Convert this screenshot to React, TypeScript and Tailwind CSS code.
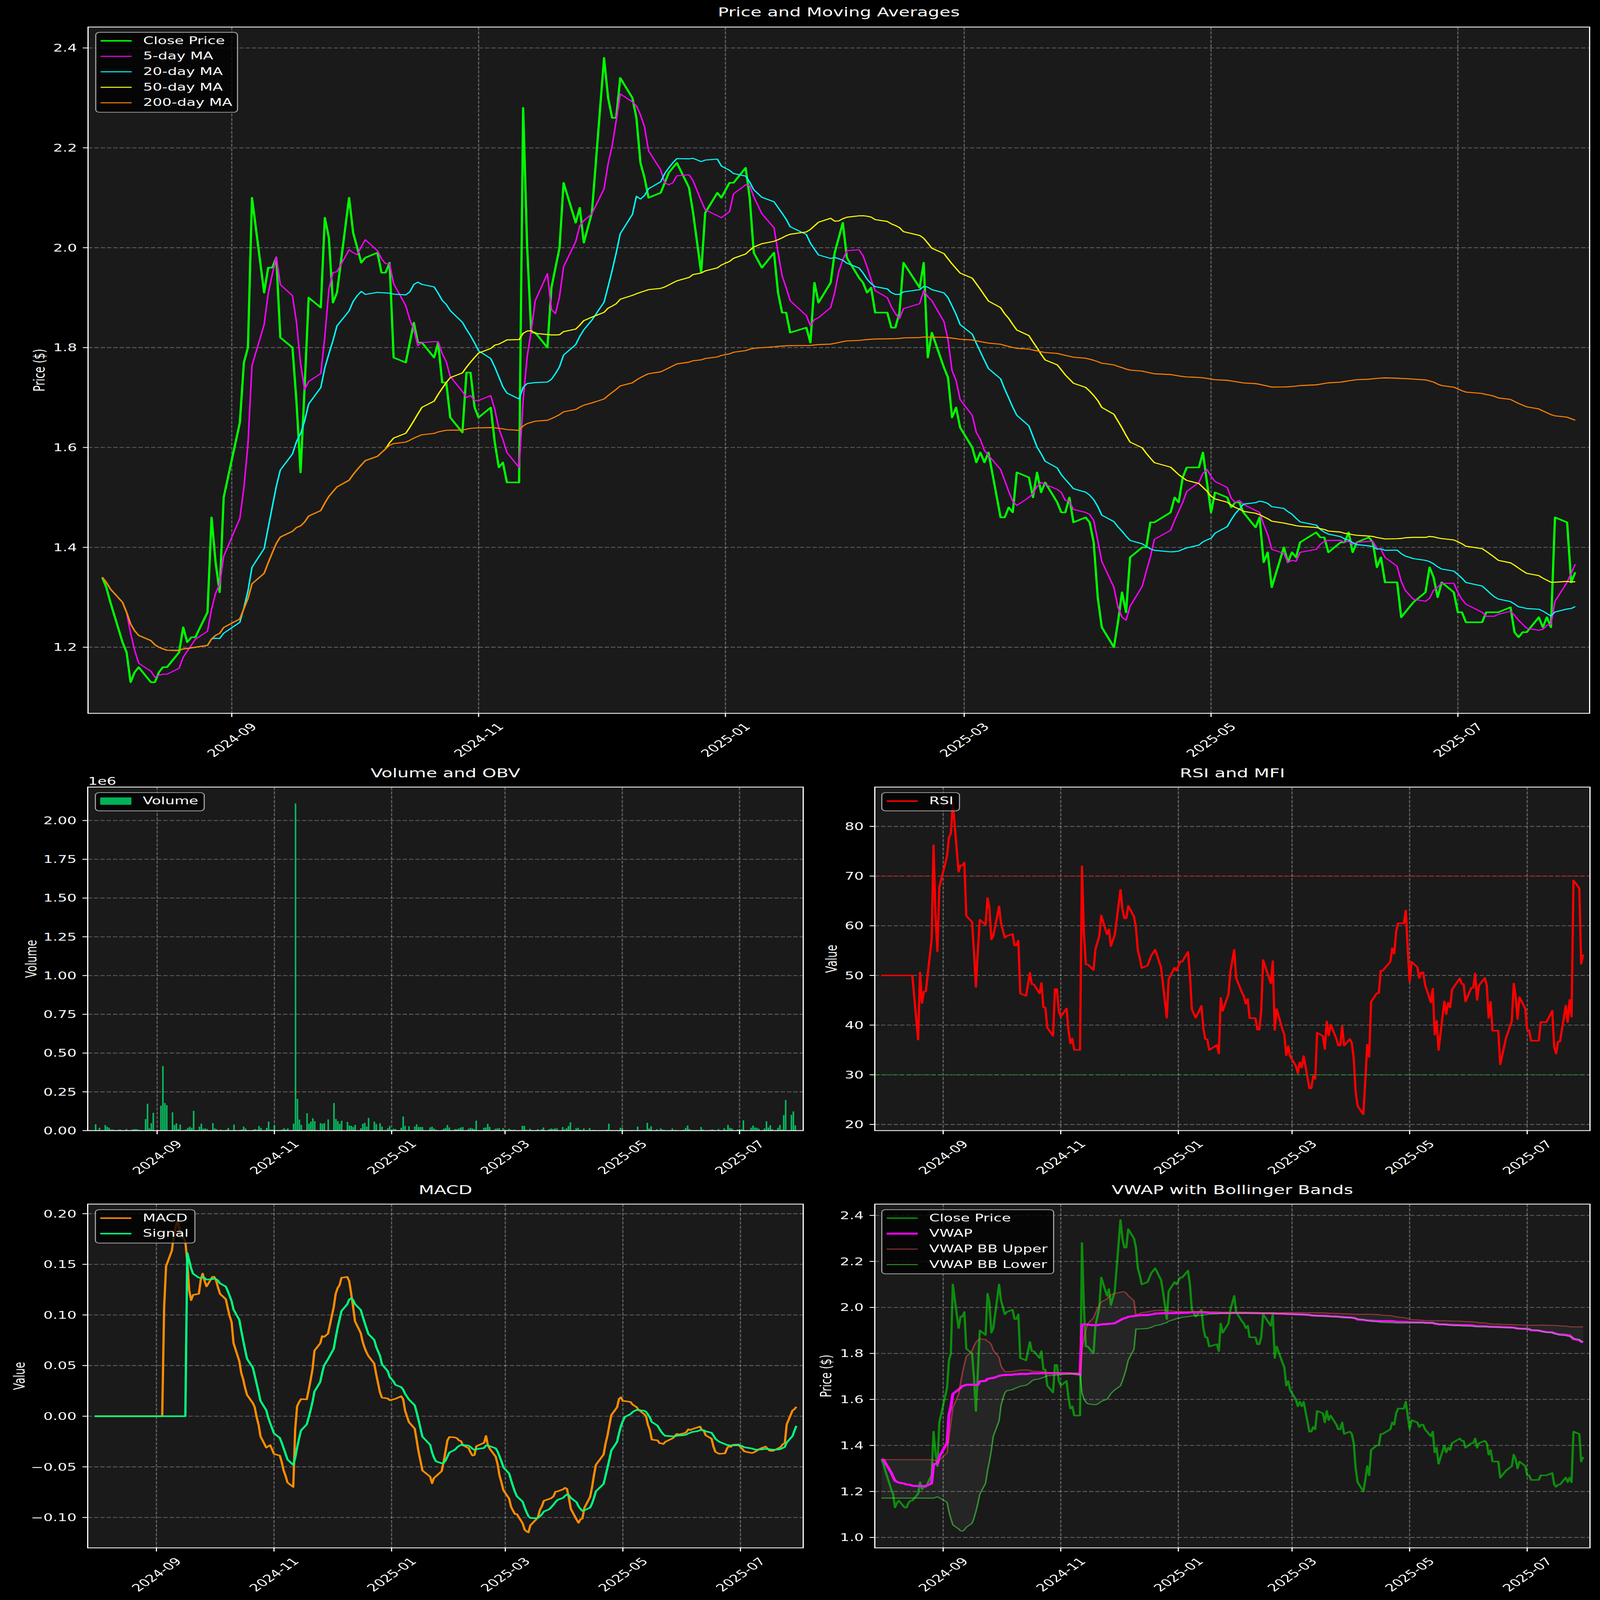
import type { ReactNode } from "react";

// [calendar day since 2024-07-31, close, volume in thousands]
const ROWS: [number, number, number][] = [
  [0,1.34,41],[1,1.32,3],[2,1.29,18],[5,1.21,36],[6,1.19,25],[7,1.13,18],[8,1.15,7],[9,1.16,7],[12,1.13,7],[13,1.13,6],[14,1.15,1],[15,1.16,3],[16,1.16,10],
  [19,1.19,7],[20,1.24,9],[21,1.21,10],[22,1.22,7],[23,1.22,4],[26,1.27,74],[27,1.46,173],[28,1.37,15],[29,1.31,48],[30,1.5,115],[34,1.65,161],[35,1.77,417],[36,1.8,178],[37,2.1,164],
  [40,1.91,118],[41,1.96,36],[42,1.96,47],[43,1.98,10],[44,1.82,39],[47,1.8,7],[48,1.69,17],[49,1.55,25],[50,1.72,17],[51,1.9,128],[54,1.88,25],[55,2.06,45],[56,2.02,12],[57,1.89,14],[58,1.91,10],
  [61,2.1,48],[62,2.03,14],[63,2.0,9],[64,1.97,1],[65,1.98,7],[68,1.99,6],[69,1.95,17],[70,1.95,1],[71,1.97,1],[72,1.78,39],[75,1.77,3],[76,1.81,7],[77,1.85,26],[78,1.81,14],[79,1.81,1],
  [82,1.78,6],[83,1.81,10],[84,1.73,6],[85,1.73,30],[86,1.66,17],[89,1.63,17],[90,1.75,58],[91,1.75,7],[92,1.68,6],[93,1.66,34],[96,1.68,3],[97,1.61,7],[98,1.56,15],[99,1.57,7],[100,1.53,14],
  [103,1.53,45],[104,2.28,2110],[105,2.0,205],[106,1.83,71],[107,1.83,37],[110,1.8,112],[111,1.92,45],[112,1.96,58],[113,2.0,80],[114,2.13,61],[117,2.05,48],[118,2.08,44],[119,2.01,48],[121,2.07,72],
  [124,2.38,178],[125,2.3,75],[126,2.26,61],[127,2.26,44],[128,2.34,64],[131,2.3,56],[132,2.26,33],[133,2.17,31],[134,2.14,23],[135,2.1,37],[138,2.11,15],[139,2.13,44],[140,2.15,50],[141,2.16,26],[142,2.17,82],
  [145,2.12,58],[146,2.07,42],[148,1.95,47],[149,2.07,26],[152,2.11,15],[153,2.1,30],[155,2.13,12],[156,2.13,10],[159,2.16,18],[160,2.1,91],[161,1.99,30],[163,1.96,28],[166,1.99,26],[167,1.91,41],[168,1.87,23],[169,1.87,23],[170,1.83,23],
  [174,1.84,20],[175,1.81,25],[176,1.93,14],[177,1.89,6],[180,1.93,4],[181,1.99,12],[182,2.02,17],[183,2.05,36],[184,1.98,20],[187,1.94,10],[188,1.93,9],[189,1.91,14],[190,1.92,20],[191,1.87,23],
  [194,1.87,12],[195,1.84,18],[196,1.84,14],[197,1.87,9],[198,1.97,64],[202,1.92,18],[203,1.97,20],[204,1.78,44],[205,1.83,23],[208,1.76,12],[209,1.74,14],[210,1.66,15],[211,1.68,1],[212,1.64,15],
  [215,1.6,12],[216,1.57,6],[217,1.59,4],[218,1.57,7],[219,1.59,1],[222,1.46,31],[223,1.46,30],[224,1.48,6],[225,1.47,4],[226,1.55,12],[229,1.54,3],[230,1.5,9],[231,1.55,1],[232,1.51,9],[233,1.53,20],
  [236,1.49,9],[237,1.47,14],[238,1.47,10],[239,1.5,14],[240,1.45,14],[243,1.46,23],[244,1.45,7],[245,1.41,15],[246,1.3,30],[247,1.24,53],[250,1.2,15],[251,1.25,18],[252,1.31,6],[253,1.27,3],[254,1.38,14],
  [257,1.4,17],[258,1.4,3],[259,1.45,4],[260,1.45,4],[264,1.47,4],[265,1.5,1],[266,1.49,6],[267,1.54,45],[268,1.56,3],[271,1.56,3],[272,1.59,3],[273,1.53,18],[274,1.47,17],[275,1.51,1],
  [278,1.5,1],[279,1.48,3],[280,1.49,1],[281,1.49,1],[282,1.47,26],[285,1.44,4],[286,1.46,3],[287,1.37,50],[288,1.39,14],[289,1.32,28],[292,1.4,9],[293,1.37,3],[294,1.39,15],[295,1.38,6],[296,1.41,4],
  [300,1.43,14],[301,1.42,4],[302,1.42,4],[303,1.39,1],[306,1.41,6],[307,1.41,17],[308,1.43,33],[309,1.39,10],[310,1.41,4],[313,1.42,4],[314,1.41,3],[315,1.36,23],[316,1.38,7],[317,1.33,1],
  [320,1.33,6],[321,1.26,7],[322,1.27,3],[324,1.29,10],[327,1.31,15],[328,1.36,4],[329,1.34,37],[330,1.3,18],[331,1.33,14],[334,1.31,7],[335,1.27,10],[336,1.27,9],[337,1.25,66],
  [341,1.25,18],[342,1.27,33],[343,1.27,20],[344,1.27,18],[345,1.27,12],[348,1.28,14],[349,1.23,60],[350,1.22,20],[351,1.23,34],[352,1.23,9],[355,1.26,18],[356,1.24,36],[357,1.26,7],[358,1.24,100],[359,1.46,197],
  [362,1.45,102],[363,1.33,124],[364,1.35,34],
];

const days = ROWS.map((r) => r[0]);
const close = ROWS.map((r) => r[1]);
const volume = ROWS.map((r) => r[2]);

const mean = (xs: number[]) => xs.reduce((a, b) => a + b, 0) / xs.length;
const rolling = (xs: number[], n: number) => xs.map((_, i) => mean(xs.slice(Math.max(0, i - n + 1), i + 1)));

const ema = (xs: number[], span: number) => {
  const a = 2 / (span + 1);
  const out: number[] = [];
  xs.forEach((x, i) => out.push(i === 0 ? x : out[i - 1] * (1 - a) + x * a));
  return out;
};

const ema12 = ema(close, 12);
const ema26 = ema(close, 26);
const macdRaw = close.map((_, i) => ema12[i] - ema26[i]).slice(25);
const signalRaw = ema(macdRaw, 9);
const macd = close.map((_, i) => (i < 25 ? 0 : macdRaw[i - 25]));
const signal = close.map((_, i) => (i < 33 ? 0 : signalRaw[i - 25]));

const rsi = (() => {
  let g = 0;
  let l = 0;
  return close.map((c, i) => {
    const d = i === 0 ? 0 : c - close[i - 1];
    g = g * (13 / 14) + Math.max(d, 0);
    l = l * (13 / 14) + Math.max(-d, 0);
    return i < 13 ? 50 : 100 - 100 / (1 + g / l);
  });
})();

const vwap = (() => {
  let pv = 0;
  let v = 0;
  return close.map((c, i) => {
    pv += (days[i] === 104 ? 2.19 : c) * volume[i];
    v += volume[i];
    return pv / v;
  });
})();

const band = (sign: number) =>
  vwap.map((_, i) => {
    const w = vwap.slice(Math.max(i, 19) - 19, Math.max(i, 19) + 1);
    const m = mean(w);
    const sd = Math.sqrt(w.reduce((a, b) => a + (b - m) ** 2, 0) / 19);
    return m + sign * 2 * sd;
  });
const upper = band(1);
const lower = band(-1);

const TICK_DAYS = [32, 93, 154, 213, 274, 335];
const TICK_LABELS = ["2024-09", "2024-11", "2025-01", "2025-03", "2025-05", "2025-07"];

type Box = { l: number; t: number; r: number; b: number };

const pts = (xs: number[], fx: (d: number) => number, fy: (v: number) => number) =>
  xs.map((v, i) => `${fx(days[i]).toFixed(1)},${fy(v).toFixed(1)}`).join(" ");

const Line = ({ points, color, w = 6.25, alpha = 1 }: { points: string; color: string; w?: number; alpha?: number }) => (
  <polyline points={points} fill="none" stroke={color} strokeOpacity={alpha} strokeWidth={w} strokeLinejoin="round" />
);

const Axes = ({
  box,
  fx,
  yTicks,
  yLabel,
  yLabelX,
  children,
}: {
  box: Box;
  fx: (d: number) => number;
  yTicks: [number, string][];
  yLabel: string;
  yLabelX: number;
  children: ReactNode;
}) => (
  <>
    <rect x={box.l} y={box.t} width={box.r - box.l} height={box.b - box.t} fill="#1a1a1a" />
    {TICK_DAYS.map((d) => (
      <line key={d} x1={fx(d)} x2={fx(d)} y1={box.t} y2={box.b} stroke="#ffffff" strokeOpacity={0.3} strokeWidth={3.33} strokeDasharray="12.3 5.3" />
    ))}
    {yTicks.map(([y]) => (
      <line key={y} x1={box.l} x2={box.r} y1={y} y2={y} stroke="#ffffff" strokeOpacity={0.3} strokeWidth={3.33} strokeDasharray="12.3 5.3" />
    ))}
    {children}
    <rect x={box.l} y={box.t} width={box.r - box.l} height={box.b - box.t} fill="none" stroke="#ffffff" strokeWidth={3.33} />
    {yTicks.map(([y, label]) => (
      <g key={label}>
        <line x1={box.l - 14.6} x2={box.l} y1={y} y2={y} stroke="#ffffff" strokeWidth={3.33} />
        <text x={box.l - 31} y={y + 15} textAnchor="end" className="fill-white text-[41.67px]">
          {label}
        </text>
      </g>
    ))}
    {TICK_DAYS.map((d, i) => (
      <g key={d}>
        <line x1={fx(d)} x2={fx(d)} y1={box.b} y2={box.b + 14.6} stroke="#ffffff" strokeWidth={3.33} />
        <text
          x={fx(d)}
          y={box.b + 123}
          textAnchor="middle"
          transform={`rotate(-45 ${fx(d)} ${box.b + 108})`}
          className="fill-white text-[41.67px]"
        >
          {TICK_LABELS[i]}
        </text>
      </g>
    ))}
    <text
      x={yLabelX}
      y={(box.t + box.b) / 2}
      textAnchor="middle"
      transform={`rotate(-90 ${yLabelX} ${(box.t + box.b) / 2})`}
      className="fill-white text-[41.67px]"
    >
      {yLabel}
    </text>
  </>
);

const Legend = ({ className, items }: { className: string; items: { label: string; swatch: string }[] }) => (
  <div className={`absolute flex flex-col border-[3.3px] border-[#a8a8a8] rounded-[12px] bg-black/80 pt-[1px] pl-[12px] ${className}`}>
    {items.map((item) => (
      <div key={item.label} className="flex items-center h-[63px] gap-[32px] text-[41.67px] whitespace-nowrap">
        <span className={`w-[87px] ${item.swatch}`} />
        {item.label}
      </div>
    ))}
  </div>
);

// top chart
const topBox = { l: 246, t: 110, r: 4441, b: 2901 };
const topX = (d: number) => 647.5 + (d - 32) * 11.305;
const topY = (v: number) => 195 + (2.4 - v) * 2031;

// volume
const volBox = { l: 245, t: 3201, r: 2244, b: 4598 };
const volX = (d: number) => 439 + (d - 32) * 5.37;
const volY = (k: number) => 4598 - (k / 1000) * 630.5;

// rsi
const rsiBox = { l: 2444, t: 3201, r: 4442, b: 4598 };
const rightX = (d: number) => 2635 + (d - 32) * 5.385;
const rsiY = (v: number) => 4573 - (v - 20) * 20.2;

// macd
const macdBox = { l: 245, t: 4897, r: 2244, b: 6295 };
const macdX = (d: number) => 437 + (d - 32) * 5.385;
const macdY = (v: number) => 5759.6 - v * 4118;

// vwap
const vwapBox = { l: 2444, t: 4897, r: 4442, b: 6295 };
const vwapY = (v: number) => 6252.6 - (v - 1) * 935.5;

const bandArea =
  pts(upper, rightX, vwapY) +
  " " +
  lower
    .map((v, i) => `${rightX(days[i]).toFixed(1)},${vwapY(v).toFixed(1)}`)
    .reverse()
    .join(" ");

export default function App() {
  // Layout is 4470x6507. The browser may open smaller than that, so fit the page to the window (1:1 at full size).
  const fit = `scale(${window.innerWidth / 4470}, ${window.innerHeight / 6507})`;

  return (
    <div className="w-screen h-screen overflow-hidden bg-black">
      <div
        className="flex flex-col w-[4470px] h-[6507px] origin-top-left bg-black text-white font-['DejaVu_Sans',sans-serif]"
        style={{ transform: fit }}
      >
        <section>
          <h2 className="flex items-center justify-center ml-[246px] w-[4195px] h-[100px] text-[50px] font-normal">Price and Moving Averages</h2>
          <div className="relative">
            <svg viewBox="0 100 4470 3000" width={4470} height={3000}>
              <Axes
                box={topBox}
                fx={topX}
                yTicks={[1.2, 1.4, 1.6, 1.8, 2.0, 2.2, 2.4].map((v) => [topY(v), v.toFixed(1)] as [number, string])}
                yLabel="Price ($)"
                yLabelX={124}
              >
                <Line points={pts(close, topX, topY)} color="#00ff00" />
                <Line points={pts(rolling(close, 5), topX, topY)} color="#ff00ff" w={4.17} />
                <Line points={pts(rolling(close, 20), topX, topY)} color="#00ffff" w={4.17} />
                <Line points={pts(rolling(close, 50), topX, topY)} color="#ffff00" w={4.17} />
                <Line points={pts(rolling(close, 200), topX, topY)} color="#ff8000" w={4.17} />
              </Axes>
            </svg>
            <Legend
              className="left-[266px] top-[30px] w-[399px] h-[328px]"
              items={[
                { label: "Close Price", swatch: "h-[6px] bg-[#00ff00]" },
                { label: "5-day MA", swatch: "h-[4px] bg-[#ff00ff]" },
                { label: "20-day MA", swatch: "h-[4px] bg-[#00ffff]" },
                { label: "50-day MA", swatch: "h-[4px] bg-[#ffff00]" },
                { label: "200-day MA", swatch: "h-[4px] bg-[#ff8000]" },
              ]}
            />
          </div>
        </section>

        <div className="grid grid-cols-[2300px_2170px]">
          <section>
            <h2 className="flex items-center justify-center ml-[245px] w-[1999px] h-[90px] text-[50px] font-normal">Volume and OBV</h2>
            <div className="relative">
              <svg viewBox="0 3190 2300 1610" width={2300} height={1610} className="overflow-visible">
                <Axes
                  box={volBox}
                  fx={volX}
                  yTicks={[0, 0.25, 0.5, 0.75, 1, 1.25, 1.5, 1.75, 2].map((v) => [volY(v * 1000), v.toFixed(2)] as [number, string])}
                  yLabel="Volume"
                  yLabelX={102}
                >
                  {ROWS.map(([d, , k]) => (
                    <rect key={d} x={volX(d) - 2.15} y={volY(k)} width={4.3} height={4598 - volY(k)} fill="#00ff7f" fillOpacity={0.7} />
                  ))}
                </Axes>
                <text x={246} y={3191} className="fill-white text-[41.67px]">
                  1e6
                </text>
              </svg>
              <Legend className="left-[265px] top-[32px] w-[307px] h-[77px]" items={[{ label: "Volume", swatch: "h-[30px] bg-[#01b45a]" }]} />
            </div>
          </section>
          <section>
            <h2 className="flex items-center justify-center ml-[144px] w-[1998px] h-[90px] text-[50px] font-normal">RSI and MFI</h2>
            <div className="relative">
              <svg viewBox="2300 3190 2170 1610" width={2170} height={1610}>
                <Axes
                  box={rsiBox}
                  fx={rightX}
                  yTicks={[20, 30, 40, 50, 60, 70, 80].map((v) => [rsiY(v), String(v)] as [number, string])}
                  yLabel="Value"
                  yLabelX={2338}
                >
                  <Line points={pts(rsi, rightX, rsiY)} color="#ff0000" />
                  <line x1={2444} x2={4442} y1={rsiY(70)} y2={rsiY(70)} stroke="#ff0000" strokeOpacity={0.5} strokeWidth={4.17} strokeDasharray="15.4 6.7" />
                  <line x1={2444} x2={4442} y1={rsiY(30)} y2={rsiY(30)} stroke="#00c000" strokeOpacity={0.5} strokeWidth={4.17} strokeDasharray="15.4 6.7" />
                </Axes>
              </svg>
              <Legend className="left-[162px] top-[32px] w-[220px] h-[77px]" items={[{ label: "RSI", swatch: "h-[6px] bg-[#ff0000]" }]} />
            </div>
          </section>
        </div>

        <div className="grid grid-cols-[2300px_2170px]">
          <section>
            <h2 className="flex items-center justify-center ml-[245px] w-[1999px] h-[80px] text-[50px] font-normal">MACD</h2>
            <div className="relative">
              <svg viewBox="0 4880 2300 1627" width={2300} height={1627}>
                <Axes
                  box={macdBox}
                  fx={macdX}
                  yTicks={[-0.1, -0.05, 0, 0.05, 0.1, 0.15, 0.2].map((v) => [macdY(v), v.toFixed(2).replace("-", "\u2212")] as [number, string])}
                  yLabel="Value"
                  yLabelX={69}
                >
                  <Line points={pts(macd, macdX, macdY)} color="#ff8c00" />
                  <Line points={pts(signal, macdX, macdY)} color="#00ff7f" />
                </Axes>
              </svg>
              <Legend
                className="left-[265px] top-[38px] w-[281px] h-[139px]"
                items={[
                  { label: "MACD", swatch: "h-[6px] bg-[#ff8c00]" },
                  { label: "Signal", swatch: "h-[6px] bg-[#00ff7f]" },
                ]}
              />
            </div>
          </section>
          <section>
            <h2 className="flex items-center justify-center ml-[144px] w-[1998px] h-[80px] text-[50px] font-normal">VWAP with Bollinger Bands</h2>
            <div className="relative">
              <svg viewBox="2300 4880 2170 1627" width={2170} height={1627} className="overflow-visible">
                <Axes
                  box={vwapBox}
                  fx={rightX}
                  yTicks={[1, 1.2, 1.4, 1.6, 1.8, 2, 2.2, 2.4].map((v) => [vwapY(v), v.toFixed(1)] as [number, string])}
                  yLabel="Price ($)"
                  yLabelX={2322}
                >
                  <Line points={pts(close, rightX, vwapY)} color="#00ff00" alpha={0.5} />
                  <Line points={pts(vwap, rightX, vwapY)} color="#ff00ff" w={8.33} />
                  <Line points={pts(upper, rightX, vwapY)} color="#ff4c4c" w={4.17} alpha={0.5} />
                  <Line points={pts(lower, rightX, vwapY)} color="#44ff44" w={4.17} alpha={0.5} />
                  <polygon points={bandArea} fill="#ffffff" fillOpacity={0.05} />
                </Axes>
              </svg>
              <Legend
                className="left-[162px] top-[38px] w-[483px] h-[264px]"
                items={[
                  { label: "Close Price", swatch: "h-[6px] bg-[#0a8a0a]" },
                  { label: "VWAP", swatch: "h-[8px] bg-[#ff00ff]" },
                  { label: "VWAP BB Upper", swatch: "h-[4px] bg-[#8f3333]" },
                  { label: "VWAP BB Lower", swatch: "h-[4px] bg-[#2e8b2e]" },
                ]}
              />
            </div>
          </section>
        </div>
      </div>
    </div>
  );
}
